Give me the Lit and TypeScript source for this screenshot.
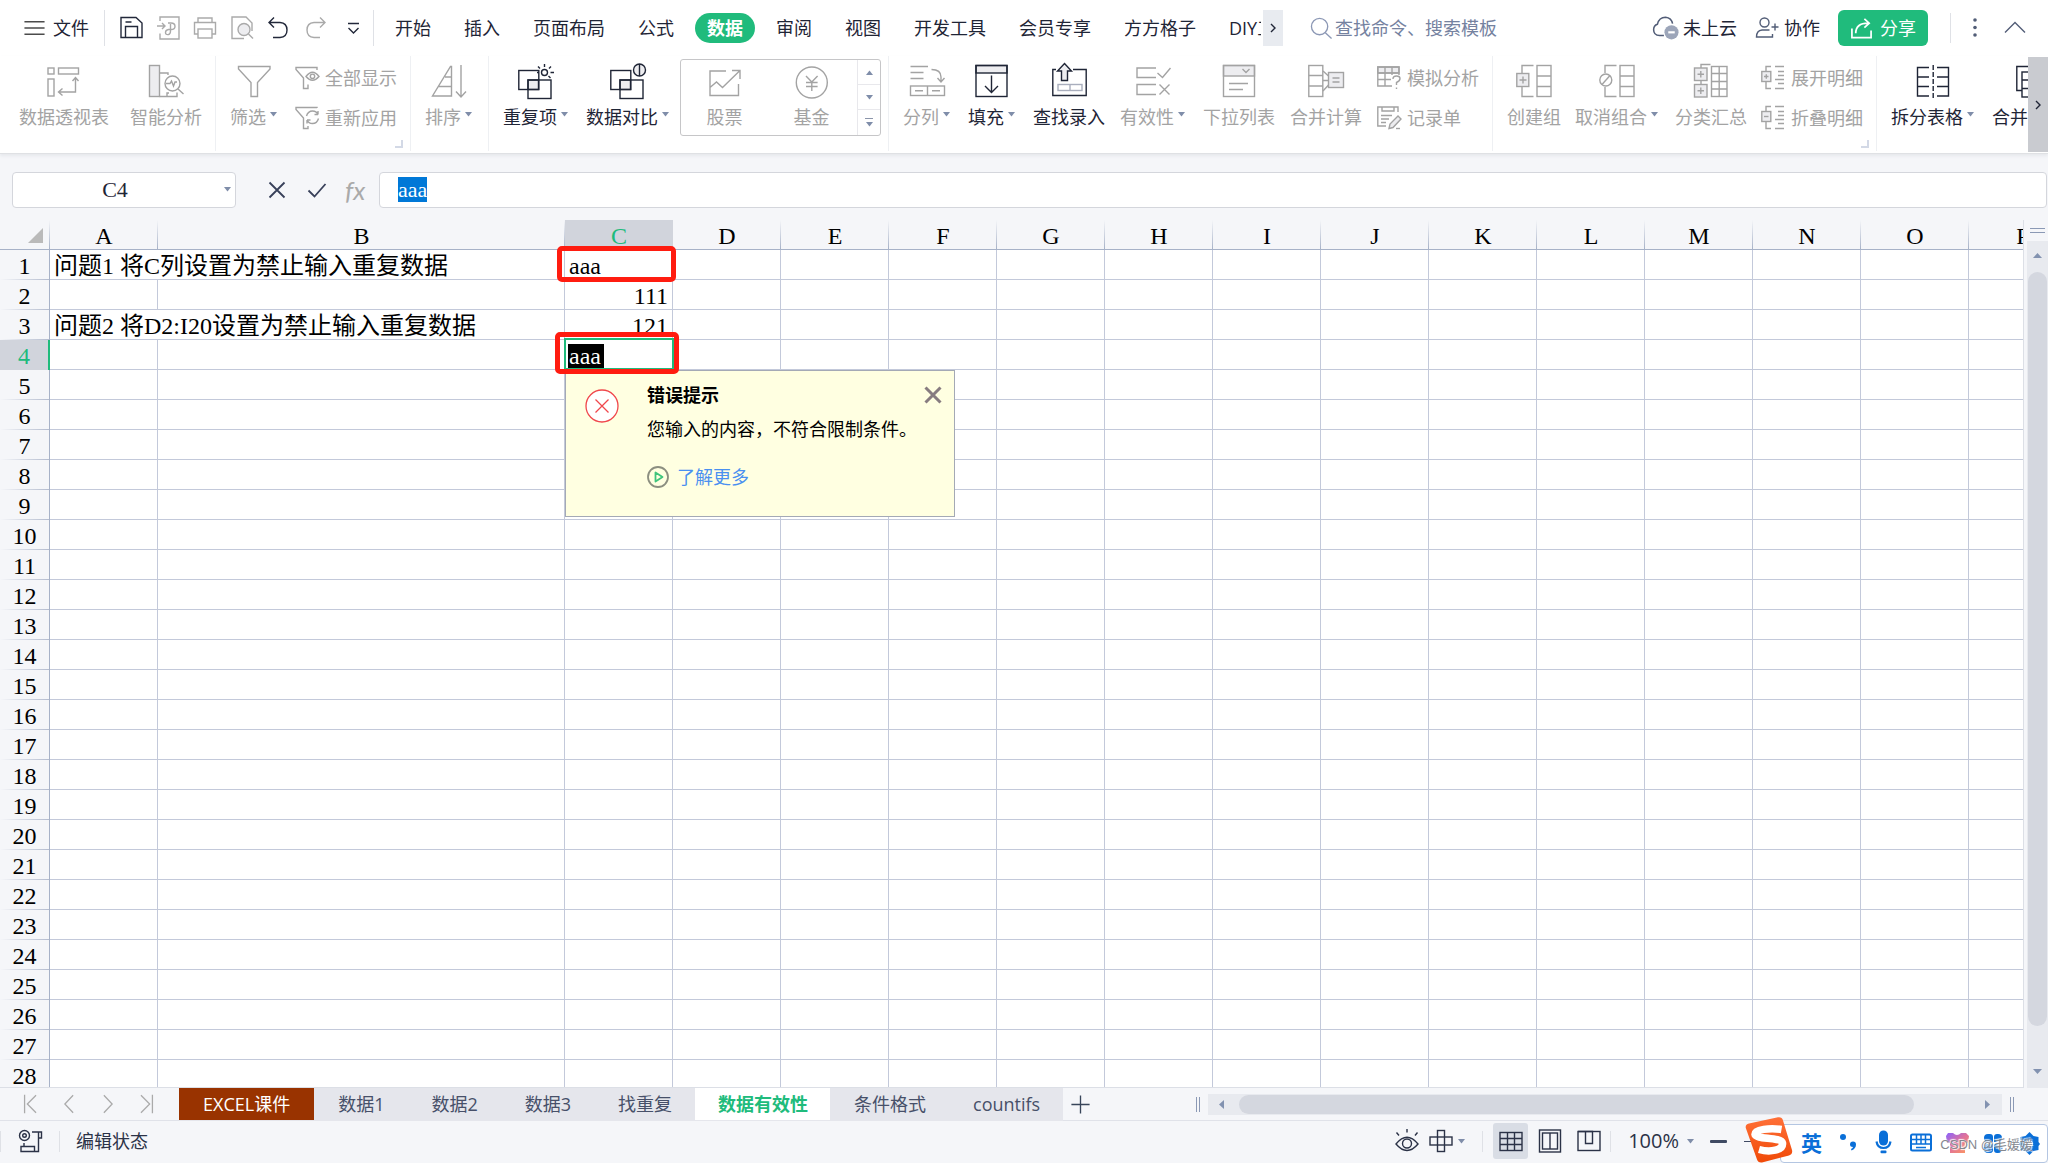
import { LitElement, html, svg, css, nothing } from "lit";
import type { SVGTemplateResult } from "lit";
import { customElement, state, query } from "lit/decorators.js";
import { classMap } from "lit/directives/class-map.js";

/* ---------- icon shapes: 36-unit ribbon icons, 24-unit small icons ---------- */
const icons: Record<string, SVGTemplateResult> = {
  pivot: svg`<rect x="2" y="4" width="6" height="6"/><rect x="12.5" y="4" width="20" height="6"/><rect x="2" y="15" width="6" height="17"/><path d="M29.5 14V28H13M26.5 17l3-3.5 3 3.5M16.5 24.5l-4 3.5 4 3.5"/>`,
  smart: svg`<rect class="tint" x="1.5" y="1.5" width="10" height="31"/><path d="M11.500 9H20v2M11.500 32.500H29v-4M19 32v-3h2"/><circle cx="24.500" cy="19.500" r="7.500"/><path d="M30 25l5.500 5M18 19.500h4l1.500-2.500 2 5 1.500-4h2"/>`,
  filter: svg`<path d="M2.500 2.500H34V5L21.500 18.500V32.500H15V18.500L2.500 5Z"/>`,
  sort: svg`<path d="M20.500 2.500V32H1.500L19.500 2.500ZM14 13h6.500M7.500 22.500h13M30 1V33M25 27.500l5 5.500 5-5.500"/>`,
  dup: svg`<rect class="tint" x="10" y="16" width="10.500" height="9.500"/><rect x=".8" y="6.500" width="20" height="19"/><rect x="10" y="16" width="23" height="18.500"/><circle cx="26.500" cy="8.500" r="3"/><path d="M26.500 0v3M20 2.500l2 2M33 2.500l-2 2M32.500 8.500H36M19 8.500h2M30.500 12l2 2"/>`,
  compare: svg`<rect class="tint" x="10" y="16" width="10.500" height="9.500"/><rect x=".8" y="6.500" width="20" height="19"/><rect x="10" y="16" width="23" height="18.500"/><circle class="tint" cx="29.500" cy="6" r="6"/><path d="M29.500 0V12"/>`,
  stock: svg`<path d="M19 7H3V31.500H31.500V20M3 23.500l6.500-5.500 6 5.500L33 6.500M25 6.500h8V15"/>`,
  fund: svg`<circle cx="17.800" cy="18.500" r="15.500"/><path d="M12 12l5.800 6 5.800-6M17.800 18V27M12 18.500h11.600M12 22.500h11.600"/>`,
  split: svg`<path d="M1.500 2.500H19M1.500 8.500H14.500M1.500 14.500H14.500M22.500 5.500Q32 5.500 32 13V17.500M28.500 14l3.500 4 3.500-4"/><rect x="1.500" y="22" width="34" height="9.500"/><path d="M18.500 22v9.500M6 26.700h8M23 26.700h8"/>`,
  fill: svg`<rect class="tint" x="2" y="1.500" width="31" height="7.500"/><rect x="2" y="1.500" width="31" height="31"/><path d="M17.500 11.500V28M11 22l6.500 6.500L24 22"/>`,
  lookup: svg`<path d="M5 5.500H1.800V31.500H35.200V5.500H22"/><path class="tint" d="M13.500-.5L20.500 7H16.500V16.500H10.500V7H6.500Z"/><g class="soft"><rect x="7" y="20.500" width="24" height="6"/><path d="M19 20.500v6"/></g>`,
  valid: svg`<path d="M21 4H2V13.500H21M21 20.500H2V30.500H21M22.500 9l5 4.500L35.500 4M24.500 20.500l10 10M34.500 20.500l-10 10"/>`,
  droplist: svg`<rect class="tint" x="2.500" y="1.500" width="31" height="10.500"/><rect x="2.500" y="1.500" width="31" height="31"/><path d="M21.500 5l3.500 3.500L28.500 5M8 19.500H27M8 25.500H22"/>`,
  consol: svg`<rect x=".8" y="1.500" width="14" height="31"/><path d="M.8 11.500h14M.8 22h14M15 7l5.500 5M15 16.500h5M15 27l5.500-6"/><rect class="tint" x="20.500" y="8.500" width="15" height="15"/><path d="M24.500 14h7M24.500 18h7"/>`,
  group: svg`<path d="M17.500 1.500H6V9M6 23v9.500H17.500"/><rect class="tint" x=".8" y="9.500" width="12" height="13"/><path d="M3.500 16h7M7 12.500v7"/><rect x="21" y="1.500" width="14" height="31"/><path d="M21 12h14M21 22.500h14"/>`,
  ungroup: svg`<path d="M17.500 1.500H6V9M6 23v9.500H17.500"/><circle cx="6.800" cy="16" r="6"/><path d="M3 20.500l8-9"/><rect x="21" y="1.500" width="14" height="31"/><path d="M21 12h14M21 22.500h14"/>`,
  subtotal: svg`<path d="M17.500 .5H8V4"/><rect class="tint" x="1.500" y="4" width="12.500" height="12.500"/><rect class="tint" x="1.500" y="20.500" width="12.500" height="12.500"/><path d="M4.500 10.200h6.500M7.800 7v6.500M4.500 26.700h6.500M7.800 23.500V30M8 16.500v4"/><rect x="18.500" y="2.500" width="15.500" height="30"/><path d="M18.500 9.500H34M18.500 17.500H34M18.500 25H34M26.200 2.500v30"/>`,
  splittable: svg`<path d="M14 3.500H2.500V32H14M2.500 13H14M2.500 22.500H14M22 3.500H33.500V32H22M22 13h11.500M22 22.500h11.500"/><path d="M18.200 1V35" stroke-dasharray="5 2"/>`,
  mergetable: svg`<path d="M6 26.500H.8V2.500H34V26.500"/><rect x="6" y="8" width="28" height="25"/><path d="M6 16h28M6 24.500h28M14 8v25"/>`,
  showall: svg`<path d="M22 4V1.500H1V3.500L8.500 12V22.500H13V18.500"/><path d="M11 10.500Q17.500 2 24 10.500Q17.500 18 11 10.500Z"/><circle cx="17.500" cy="10.300" r="2.200"/>`,
  reapply: svg`<path d="M22 2V1.500H1V3.500L8.500 12V22.500H13V20"/><path d="M11.500 10Q13 5 17.500 5Q21.500 5 23 8.500V5M23.500 12.500Q22 17.500 17.500 17.500Q13.500 17.500 12 14V17.500M23 8.500h-3.500M12 14h3.500"/>`,
  whatif: svg`<path class="tint" d="M.8 1H22v6H.8Z"/><path d="M22 9V1H.8V20H15M.8 7H22M.8 13.500H14M8 1V20M15 1V9M16 13Q16 10 19.500 10Q23 10 23 12.500Q23 15 19.500 16.500V19M19.500 21.500V23"/>`,
  record: svg`<path d="M21 6V1H.8V20H9M5 1.500V5H17V1M4 9.500H15M4 13H12M4 16.500H9"/><path class="tint" d="M12 22.500l1-4.500L21 10l3 3-8 8.500Z"/><path d="M19 22.500h4"/>`,
  expand: svg`<path d="M10 .5H5V5.500M5 15.500V22.500H10M14 .5h9M17 5.500h6M17 9.500h6M14 13.500h9M17 17.500h6M14 22.500h9"/><rect class="tint" x=".8" y="5.500" width="9" height="10"/><path d="M3 10.500h4.500M5.300 8.200v4.600"/>`,
  collapse: svg`<path d="M10 .5H5V5.500M5 15.500V22.500H10M14 .5h9M17 5.500h6M17 9.500h6M14 13.500h9M17 17.500h6M14 22.500h9"/><rect class="tint" x=".8" y="5.500" width="9" height="10"/><path d="M3 10.500h4.500"/>`,
  menu: svg`<path d="M1.500 5h21M1.500 11.500h21M1.500 18h21"/>`,
  save: svg`<path d="M2 1.500H17L23 7V21.500H2Z"/><path d="M6.500 21.500V10.500H18.500V21.500M6.500 6h6"/>`,
  exportpdf: svg`<path d="M4 5V1H23V23H4V17.500M1 10H8.500M6 7l3 3-3 3M12 7H15Q19 7 19 10.500Q19 13.500 15 13.500H12.500Q9.500 14 9.500 16.500Q9.500 19 12.500 18.500Q14.500 18 14.500 15V8"/>`,
  print: svg`<path d="M5 6V2H19V6M5 18H1.500V6.500H22.500V18H19"/><rect x="5" y="13" width="14" height="9"/>`,
  preview: svg`<path d="M14 22.500H2V1H16l6 6v8"/><circle class="tint" cx="14" cy="13.500" r="6"/><path d="M18.500 18l4.500 4.500"/>`,
  undo: svg`<path d="M7 1.500L2 6.500l5 5M2 6.500H13Q20 7 20 14Q20 21 13 21.500H6"/>`,
  redo: svg`<path d="M16 1.500l5 5-5 5M21 6.500H10Q3 7 3 14Q3 21 10 21.500H16"/>`,
  more: svg`<path d="M7 7.500h11M7.500 12l5 5 5-5"/>`,
  search: svg`<circle cx="10" cy="10" r="8.500"/><path d="M16 16.500l6.500 6"/>`,
  cloud: svg`<path d="M11 19H7Q1.500 18.500 1.500 13.500Q1.500 9.500 5 8.500Q6.500 2 12.500 2Q18 2.500 19 8"/><circle class="badge" cx="18" cy="16" r="6.500"/><path class="onbadge" d="M15 16h6"/>`,
  person: svg`<circle cx="9.500" cy="6.500" r="4.500"/><path d="M14.500 14H7Q1.500 14.500 1.500 21H17.500V18M20 7.500v7M16.500 11h7"/>`,
  share: svg`<path d="M2 12V21.500H22V14M6 17Q6 6.500 19 6.500M15 2l5 4.500-5 4.500"/>`,
  dots: svg`<g class="solid"><circle cx="12" cy="4" r="1.800"/><circle cx="12" cy="11.500" r="1.800"/><circle cx="12" cy="19" r="1.800"/></g>`,
  up: svg`<path d="M2 16.500L12 6.500l10 10"/>`,
  right: svg`<path d="M10 8l4 4-4 4"/>`,
  cross: svg`<path d="M4.500 4.500l15 15M19.500 4.500l-15 15"/>`,
  tick: svg`<path d="M3.500 12.500l6 6L20.500 6"/>`,
  first: svg`<path d="M5 2V22M17.500 2.500L8 12l9.500 9.500"/>`,
  prev: svg`<path d="M16.500 2.500L7.500 12l9 9.500"/>`,
  next: svg`<path d="M7.500 2.500L16.500 12l-9 9.500"/>`,
  last: svg`<path d="M19 2V22M6.500 2.500L16 12l-9.500 9.500"/>`,
  plus: svg`<path d="M12 2.500v19M2.500 12h19"/>`,
  macro: svg`<circle cx="6.500" cy="6.500" r="5"/><circle cx="6.500" cy="6.500" r="1.800"/><path d="M14 3H23.500V9H21M20.500 3V22.500H3V17.500H16.500V22M6 14v3"/>`,
  eye: svg`<path d="M1 15Q12 1.500 23 15Q12 28 1 15ZM12 0v3.500M1.500 3.500l2.500 3M22.500 3.500l-2.500 3"/><circle cx="12" cy="14.500" r="4.500"/>`,
  crosshair: svg`<rect x="8.500" y="1.500" width="7" height="21"/><rect x="1" y="8" width="22" height="8"/>`,
  gridview: svg`<rect x="1" y="3.500" width="22" height="18"/><path d="M1 9.500h22M1 15.500h22M8.500 3.500v18M15.500 3.500v18"/>`,
  pageview: svg`<rect x="1.500" y="1" width="21" height="22"/><rect x="4.500" y="4" width="15" height="16"/><path d="M12 4v16"/>`,
  breakview: svg`<rect x="1" y="2.500" width="22" height="19"/><path d="M1 2.500h14.500V14.500H8.500V2.500"/>`,
};

const icon = (name: string, size: number, cls = "") => html`
  <svg class="ic ${cls}" width=${size} height=${size} viewBox=${size >= 36 ? "0 0 36 36" : "0 0 24 24"} aria-hidden="true">${icons[name]}</svg>`;

const caret = html`<svg class="caret" width="7" height="5" viewBox="0 0 7 5" aria-hidden="true"><path d="M0 0h7L3.500 4.500Z"/></svg>`;

interface Command { label: string; icon: string; on?: boolean; drop?: boolean }
type Entry = Command | Command[] | "gallery";
interface Group { entries: Entry[]; launcher?: boolean; tight?: boolean }

const ribbon: Group[] = [
  { entries: [{ label: "数据透视表", icon: "pivot" }, { label: "智能分析", icon: "smart" }] },
  {
    launcher: true,
    entries: [
      { label: "筛选", icon: "filter", drop: true },
      [{ label: "全部显示", icon: "showall" }, { label: "重新应用", icon: "reapply" }],
    ],
  },
  { entries: [{ label: "排序", icon: "sort", drop: true }] },
  {
    entries: [
      { label: "重复项", icon: "dup", on: true, drop: true },
      { label: "数据对比", icon: "compare", on: true, drop: true },
      "gallery",
    ],
  },
  {
    entries: [
      { label: "分列", icon: "split", drop: true },
      { label: "填充", icon: "fill", on: true, drop: true },
      { label: "查找录入", icon: "lookup", on: true },
      { label: "有效性", icon: "valid", drop: true },
      { label: "下拉列表", icon: "droplist" },
      { label: "合并计算", icon: "consol" },
      [{ label: "模拟分析", icon: "whatif" }, { label: "记录单", icon: "record" }],
    ],
  },
  {
    launcher: true,
    tight: true,
    entries: [
      { label: "创建组", icon: "group" },
      { label: "取消组合", icon: "ungroup", drop: true },
      { label: "分类汇总", icon: "subtotal" },
      [{ label: "展开明细", icon: "expand" }, { label: "折叠明细", icon: "collapse" }],
    ],
  },
  {
    entries: [
      { label: "拆分表格", icon: "splittable", on: true, drop: true },
      { label: "合并表格", icon: "mergetable", on: true, drop: true },
    ],
  },
];

const menus = ["开始", "插入", "页面布局", "公式", "数据", "审阅", "视图", "开发工具", "会员专享", "方方格子", "DIY工具箱"];
const quick: [string, string, boolean][] = [
  ["save", "保存", true], ["exportpdf", "输出为PDF", false], ["print", "打印", false],
  ["preview", "打印预览", false], ["undo", "撤销", true], ["redo", "恢复", false], ["more", "自定义", true],
];
const columns = "ABCDEFGHIJKLMNOP".split("");
const sheets = ["EXCEL课件", "数据1", "数据2", "数据3", "找重复", "数据有效性", "条件格式", "countifs"];
const notes: Record<number, string> = {
  1: "问题1 将C列设置为禁止输入重复数据",
  3: "问题2 将D2:I20设置为禁止输入重复数据",
};
const columnC: Record<number, string | number> = { 1: "aaa", 2: 111, 3: 121 };

@customElement("app-root")
export class AppRoot extends LitElement {
  @state() private menu = "数据";
  @state() private sheet = "数据有效性";
  @state() private warning = true;
  @query(".formula") private formula!: HTMLInputElement;

  static styles = css`
    :host {
      display: flex; flex-direction: column; height: 100vh; overflow: hidden; position: relative;
      background: #f5f6f9; color: #1f2536;
      font: 18px/24px "Open Sans", "Noto Sans CJK SC", sans-serif;
    }
    * { box-sizing: border-box; }
    button, input { font: inherit; color: inherit; border: 0; padding: 0; margin: 0; background: none; outline: none; }
    button { white-space: nowrap; cursor: pointer; flex: none; display: flex; align-items: center; }
    a { text-decoration: none; }
    .ic { display: block; flex: none; overflow: visible; fill: none; stroke: currentColor; stroke-width: 1.4; }
    .ic .tint { fill: #ededf0; }
    .ic .soft { stroke: #a9aebd; }
    .ic .solid { fill: currentColor; stroke: none; }
    .ic .badge { fill: #9ca5b9; stroke: none; }
    .ic .onbadge { stroke: #fff; stroke-width: 2; }
    .caret { fill: #7f8da9; flex: none; display: block; }
    .rule { width: 1px; flex: none; background: #dfe1e6; }

    /* menu bar */
    .menubar { display: flex; align-items: center; height: 56px; flex: none; background: #fff; }
    .menubar .rule { height: 36px; }
    .file { gap: 7px; padding: 0 15px 0 23px; }
    .file .ic { color: #4b4b4b; }
    .quick { display: flex; gap: 13px; padding: 0 8px 0 14px; color: #22283a; }
    .quick .off { color: #aaa; }
    .menus { display: flex; gap: 33px; padding-left: 21px; align-items: center; }
    .menus button { height: 30px; }
    .menus .current { background: #20bb7c; color: #fff; font-weight: 700; border-radius: 15px; padding: 0 12px; margin: 0 -12px; }
    .menus .cut { width: 32px; overflow: hidden; margin-right: 2px; }
    .scrollmenu { width: 20px; height: 36px; background: #e8ebf0; justify-content: center; }
    .search { display: flex; align-items: center; gap: 2px; margin-left: 27px; color: #8c98b5; flex: 0 1 260px; min-width: 0; }
    .search input { width: 100%; }
    .search input::placeholder { color: #75829f; opacity: 1; }
    .account { display: flex; align-items: center; gap: 18px; margin-left: auto; padding-right: 21px; }
    .account button { gap: 5px; }
    .account .ic { color: #525d77; }
    .account .share { height: 36px; padding: 0 12px; gap: 7px; background: #20bb7c; color: #fff; border-radius: 6px; }
    .account .share .ic { color: #fff; stroke-width: 1.8; }
    .account .rule { height: 30px; margin: 0 -6px 0 4px; }
    .account .rule + button { margin-right: -2px; }

    /* ribbon */
    .ribbon { display: flex; height: 98px; flex: none; background: #fff; border-bottom: 1px solid #dfe1e4; box-shadow: 0 2px 3px #e6e8ec; position: relative; }
    .groups { display: flex; flex: 1; min-width: 0; overflow: hidden; height: 95px; }
    .group { display: flex; align-items: flex-start; gap: 15px; padding: 8px 13px 0 14px; border-right: 1px solid #eef0f3; flex: none; position: relative; color: #a3a3a3; }
    .group.tight { gap: 14px; }
    .group:first-child { padding-left: 19px; gap: 21px; }
    .cmd { flex-direction: column; gap: 5px; color: #a3a3a3; }
    .cmd.on { color: #1f2536; }
    .cmd.drop { margin-right: 3px; }
    .cmd .label { display: flex; align-items: center; gap: 4px; }
    .cmd .caret { margin-top: -6px; }
    .pair { display: flex; flex-direction: column; gap: 16px; padding-top: 2px; }
    .pair button { gap: 6px; color: #a3a3a3; }
    .launcher { position: absolute; right: 7px; bottom: 3px; width: 8px; height: 8px; border: solid #d3d9e6; border-width: 0 2px 2px 0; }
    .gallery { display: flex; width: 201px; height: 77px; border: 1px solid #c6c6c8; border-radius: 3px; margin: -5px -6px 0 -7px; }
    .gallery .cells { display: flex; flex: 1; justify-content: space-around; padding: 4px 2px 0 0; }
    .steps { width: 23px; display: grid; grid-template-rows: repeat(3, 1fr); border-left: 1px solid #e8e8ec; }
    .steps button { justify-content: center; border-bottom: 1px solid #e8e8ec; flex-direction: column; gap: 3px; }
    .steps button:last-child { border-bottom: 0; }
    .steps .flip { transform: rotate(180deg); }
    .steps .bar { width: 8px; height: 1px; background: #8b95aa; }
    .scrollribbon { width: 20px; height: 95px; margin-top: 1px; background: #c9cbd0; justify-content: center; }

    /* formula bar */
    .formulabar { display: flex; align-items: center; height: 66px; flex: none; padding: 5px 1px 0 12px; }
    .box { display: flex; align-items: center; height: 36px; background: #fff; border: 1px solid #d4d6dc; border-radius: 4px; }
    .namebox { width: 224px; padding-right: 4px; margin-right: 29px; }
    .namebox input { flex: 1; min-width: 0; text-align: center; padding-right: 7px; }
    .box input { font: 22px/25px "Liberation Serif", "Noto Sans CJK SC", serif; height: 25px; }
    .tools { display: flex; align-items: center; gap: 16px; margin-right: 12px; color: #38405a; }
    .tools .ic { stroke-width: 1.8; }
    .fx { font: italic 26px/30px Lato, "Open Sans", sans-serif; color: #aaa; width: 22px; }
    .formulabox { flex: 1; min-width: 0; padding: 0 18px; }
    .formula { width: 100%; }
    .formula::selection { background: #0078d7; color: #fff; }

    /* sheet */
    .sheet { display: flex; flex: 1; min-height: 0; }
    .view { flex: 1; min-width: 0; overflow: hidden; border-right: 1px solid #dcdfe6; border-bottom: 1px solid #dcdfe6; }
    table { table-layout: fixed; border-collapse: separate; border-spacing: 0; width: 2077px; font: 24px/24px "Liberation Serif", "Noto Sans CJK SC", serif; color: #000; }
    .c-head { width: 50px; } .c-std { width: 108px; } .c-wide { width: 407px; }
    tr { height: 30px; }
    th { font-weight: 400; padding: 3px 0 1px; text-align: center; background: #f5f6f9; }
    thead th { border-bottom: 1px solid #a7b2c8; background: linear-gradient(to bottom, #f5f6f9, #a7b2c8) right / 1px 100% no-repeat #f5f6f9; }
    tbody th { border-right: 1px solid #a7b2c8; background: linear-gradient(to right, #f5f6f9, #b4bccf) bottom / 100% 1px no-repeat #f5f6f9; }
    thead th.hot { background: #d1d4dc; color: #20bb7c; }
    tbody th.hot { background: #d1d4dc; color: #20bb7c; border-right: 2px solid #20bb7c; }
    td { background: #fff; border-right: 1px solid #c3c9da; border-bottom: 1px solid #c3c9da; padding: 4px 4px 1px; white-space: nowrap; position: relative; }
    td.num { text-align: right; }
    .corner { display: block; width: 15px; height: 15px; margin: 0 0 0 28px; background: #bababa; clip-path: polygon(100% 0, 100% 100%, 0 100%); }
    .editor { position: absolute; z-index: 1; left: -1px; right: -2px; top: -2px; height: 32px; border: 2px solid #20bb7c; background: #fff; padding: 4px 2px 0; }
    .editor span { display: block; width: max-content; background: #000; color: #fff; padding: 0 3px 0 1px; }
    .mark { position: absolute; z-index: 3; border: 5px solid #ff1c10; border-radius: 5px; pointer-events: none; }
    .mark.one { left: -8px; top: -4px; width: 119px; height: 36px; }
    .mark.two { left: -10px; top: -8px; width: 124px; height: 42px; }
    .tip { position: absolute; z-index: 2; left: 0; top: 30px; width: 390px; height: 147px; background: #ffffe1; border: 1px solid #a4a9b5; font: 18px/24px "Open Sans", "Noto Sans CJK SC", sans-serif; display: grid; grid-template-columns: 62px 1fr auto; align-content: start; padding: 12px 9px 0 19px; }
    .tip .alert { margin-top: 6px; }
    .tip h2 { font-size: 18px; line-height: 24px; margin: 0; }
    .tip p { margin: 10px 0 24px; line-height: 24px; }
    .tip a { display: flex; align-items: center; gap: 8px; color: #4a90f0; }
    .tip .close { align-self: start; color: #877c80; margin-left: -24px; }
    .tip .close .ic { stroke-width: 3; }
    .vscroll { width: 24px; display: flex; flex-direction: column; padding-left: 3px; }
    .splitter { height: 21px; display: flex; flex-direction: column; justify-content: center; align-items: center; gap: 3px; padding-bottom: 1px; }
    .splitter i { width: 15px; height: 1px; background: #8b99b5; }
    .vtrack { flex: 1; min-height: 0; background: #e8eaef; display: flex; flex-direction: column; padding: 0 1px; }
    .vtrack button { height: 31px; justify-content: center; padding-bottom: 3px; }
    .vtrack .down { height: 62px; padding-top: 32px; }
    .thumb { background: #d4d7df; border-radius: 10px; flex: 1; }

    /* sheet tabs */
    .tabbar { display: flex; height: 33px; flex: none; border-bottom: 1px solid #e0e2e9; }
    .nav { display: flex; align-items: center; gap: 15px; padding: 0 22px 0 20px; color: #aaa; width: 179px; justify-content: space-between; }
    .tabs { display: flex; background: #e5e6ec; height: 33px; padding-bottom: 1px; }
    .tabs button { padding: 0 23px 0 24px; color: #475069; }
    .tabs .first { background: #993300; color: #fff; padding: 0 24px; }
    .tabs .current { background: #fff; color: #20bb7c; font-weight: 700; padding: 0 22px 0 23px; }
    .add { padding: 0 6px; color: #38455a; }
    .hscroll { display: flex; align-items: center; width: 852px; margin-left: auto; padding-right: 34px; gap: 8px; flex: none; }
    .grip { width: 4px; height: 15px; border: solid #8b99b5; border-width: 0 1px; flex: none; }
    .htrack { flex: 1; height: 21px; background: #e8eaef; display: flex; align-items: center; }
    .htrack button { width: 31px; height: 21px; justify-content: center; padding-right: 5px; }
    .htrack .rt { width: 88px; padding: 0 0 0 58px; }
    .htrack .thumb { height: 19px; }
    .turn-l { transform: rotate(90deg); } .turn-r { transform: rotate(-90deg); } .turn-u { transform: rotate(180deg); }
    .scrollcaret { fill: #8292b0; display: block; flex: none; }

    /* status bar */
    .status { display: flex; align-items: center; height: 42px; flex: none; color: #2b3247; padding-bottom: 2px; }
    .status .rule { height: 21px; }
    .macro { padding: 0 17px; }
    .mode { padding-left: 16px; }
    .viewtools { display: flex; align-items: center; margin-left: auto; }
    .viewtools .cursor { gap: 5px; margin: 0 17px 0 10px; }
    .viewbtn { width: 35px; height: 36px; justify-content: center; border-radius: 3px; margin-right: 4px; }
    .viewbtn.current { background: #d9dde5; margin-left: 10px; }
    .zoom { gap: 8px; font-size: 20px; padding: 0 16px 0 17px; }
    .minus { width: 17px; height: 3px; background: #3f4a63; border-radius: 1px; margin-right: 17px; }
    .level { appearance: none; width: 300px; height: 1px; background: #3f4a63; margin-right: 4px; }
    .level::-webkit-slider-thumb { appearance: none; width: 8px; height: 16px; background: #3f4a63; }

    /* input-method toolbar floating over the window */
    .ime { position: absolute; z-index: 5; right: 0; bottom: 0; display: flex; align-items: center; height: 39px; width: 268px; background: #fff; border: 1px solid #b4c6e2; border-radius: 4px; color: #0a6fd8; padding: 0 0 2px 20px; }
    .ime .logo { position: absolute; left: -36px; top: -8px; }
    .ime b { font-size: 21px; line-height: 30px; }
    .ime svg { display: block; flex: none; overflow: visible; }
    .stamp { position: absolute; right: 14px; top: 10px; font: 13px/20px "Liberation Sans", "Noto Sans CJK SC", sans-serif; color: #85888f; text-shadow: 1px 1px 1px #fff, -1px -1px 1px #fff; }
  `;

  firstUpdated() {
    this.formula.focus();
    this.formula.select();
  }

  private command(c: Command) {
    return html`<button class=${classMap({ cmd: true, on: !!c.on, drop: !!c.drop })}>
      ${icon(c.icon, 36)}<span class="label">${c.label}${c.drop ? caret : nothing}</span>
    </button>`;
  }

  private entry(e: Entry) {
    if (e === "gallery") {
      return html`<div class="gallery">
        <div class="cells">${this.command({ label: "股票", icon: "stock" })}${this.command({ label: "基金", icon: "fund" })}</div>
        <div class="steps">
          <button aria-label="上一行"><span class="flip">${caret}</span></button>
          <button aria-label="下一行">${caret}</button>
          <button aria-label="更多"><span class="bar"></span>${caret}</button>
        </div>
      </div>`;
    }
    if (Array.isArray(e)) {
      return html`<div class="pair">${e.map((c) => html`<button>${icon(c.icon, 24)}<span>${c.label}</span></button>`)}</div>`;
    }
    return this.command(e);
  }

  private scrollCaret(turn: string) {
    return html`<svg class="scrollcaret ${turn}" width="9" height="5" viewBox="0 0 9 5" aria-hidden="true"><path d="M0 0h9L4.500 5Z"/></svg>`;
  }

  private tip() {
    return html`<div class="tip" role="alert">
      <svg class="alert" width="34" height="34" viewBox="0 0 34 34" fill="#fff" stroke="#f0474c" stroke-width="1.300"><circle cx="17" cy="17" r="16"/><path d="M10.500 10.500l13 13M23.500 10.500l-13 13"/></svg>
      <div>
        <h2>错误提示</h2>
        <p>您输入的内容，不符合限制条件。</p>
        <a href="#"><svg width="22" height="22" viewBox="0 0 22 22" fill="none"><circle cx="11" cy="11" r="10" stroke="#8c8f80" stroke-width="1.800"/><path d="M8.500 6.500V15.500L15.500 11Z" stroke="#3fc47c" stroke-width="1.800" stroke-linejoin="round"/></svg>了解更多</a>
      </div>
      <button class="close" aria-label="关闭" @click=${() => (this.warning = false)}>${icon("cross", 24)}</button>
    </div>`;
  }

  private cellC(row: number) {
    if (row === 4) {
      return html`<td><div class="editor"><span>aaa</span></div><span class="mark two"></span>${this.warning ? this.tip() : nothing}</td>`;
    }
    const value = columnC[row];
    return html`<td class=${typeof value === "number" ? "num" : ""}>${value ?? nothing}${row === 1 ? html`<span class="mark one"></span>` : nothing}</td>`;
  }

  private row(n: number) {
    return html`<tr>
      <th scope="row" class=${n === 4 ? "hot" : ""}>${n}</th>
      ${notes[n] ? html`<td colspan="2">${notes[n]}</td>` : html`<td></td><td></td>`}
      ${this.cellC(n)}
      ${columns.slice(3).map(() => html`<td></td>`)}
    </tr>`;
  }

  render() {
    return html`
      <header class="menubar">
        <button class="file">${icon("menu", 23)}文件</button>
        <span class="rule"></span>
        <div class="quick">${quick.map(([n, label, on]) => html`<button class=${on ? "" : "off"} aria-label=${label}>${icon(n, 24)}</button>`)}</div>
        <span class="rule"></span>
        <nav class="menus">
          ${menus.map((m, i) => html`<button class=${classMap({ current: m === this.menu, cut: i === menus.length - 1 })} @click=${() => (this.menu = m)}>${m}</button>`)}
        </nav>
        <button class="scrollmenu" aria-label="更多选项卡">${icon("right", 24)}</button>
        <label class="search">${icon("search", 23)}<input type="text" placeholder="查找命令、搜索模板" aria-label="查找命令、搜索模板"></label>
        <div class="account">
          <button>${icon("cloud", 26)}未上云</button>
          <button>${icon("person", 24)}协作</button>
          <button class="share">${icon("share", 23)}分享</button>
          <span class="rule"></span>
          <button aria-label="更多">${icon("dots", 24)}</button>
          <button aria-label="收起功能区">${icon("up", 24)}</button>
        </div>
      </header>

      <section class="ribbon">
        <div class="groups">
          ${ribbon.map((g) => html`<div class=${classMap({ group: true, tight: !!g.tight })}>
            ${g.entries.map((e) => this.entry(e))}${g.launcher ? html`<span class="launcher"></span>` : nothing}
          </div>`)}
        </div>
        <button class="scrollribbon" aria-label="向右滚动">${icon("right", 24)}</button>
      </section>

      <section class="formulabar">
        <div class="box namebox"><input type="text" .value=${"C4"} aria-label="名称框"><button aria-label="名称列表">${caret}</button></div>
        <div class="tools">
          <button aria-label="取消">${icon("cross", 24)}</button>
          <button aria-label="输入">${icon("tick", 24)}</button>
          <button class="fx" aria-label="插入函数">fx</button>
        </div>
        <div class="box formulabox"><input class="formula" type="text" .value=${"aaa"} aria-label="编辑栏"></div>
      </section>

      <main class="sheet">
        <div class="view">
          <table>
            <colgroup><col class="c-head">${columns.map((c) => html`<col class=${c === "B" ? "c-wide" : "c-std"}>`)}</colgroup>
            <thead><tr><th aria-label="全选"><span class="corner"></span></th>${columns.map((c) => html`<th scope="col" class=${c === "C" ? "hot" : ""}>${c}</th>`)}</tr></thead>
            <tbody>${Array.from({ length: 28 }, (_, i) => this.row(i + 1))}</tbody>
          </table>
        </div>
        <div class="vscroll">
          <div class="splitter"><i></i><i></i></div>
          <div class="vtrack">
            <button aria-label="向上">${this.scrollCaret("turn-u")}</button>
            <div class="thumb"></div>
            <button class="down" aria-label="向下">${this.scrollCaret("")}</button>
          </div>
        </div>
      </main>

      <section class="tabbar">
        <div class="nav">
          ${[["first", "第一张"], ["prev", "上一张"], ["next", "下一张"], ["last", "最后一张"]].map(([n, label]) => html`<button aria-label=${label}>${icon(n, 22)}</button>`)}
        </div>
        <div class="tabs">
          ${sheets.map((s, i) => html`<button class=${classMap({ first: i === 0, current: s === this.sheet })} @click=${() => (this.sheet = s)}>${s}</button>`)}
        </div>
        <button class="add" aria-label="新建工作表">${icon("plus", 23)}</button>
        <div class="hscroll">
          <span class="grip"></span>
          <div class="htrack">
            <button aria-label="向左">${this.scrollCaret("turn-l")}</button>
            <div class="thumb"></div>
            <button class="rt" aria-label="向右">${this.scrollCaret("turn-r")}</button>
          </div>
          <span class="grip"></span>
        </div>
      </section>

      <footer class="status">
        <span class="rule"></span>
        <button class="macro" aria-label="宏">${icon("macro", 24)}</button>
        <span class="rule"></span>
        <span class="mode">编辑状态</span>
        <div class="viewtools">
          <button aria-label="护眼模式">${icon("eye", 24)}</button>
          <button class="cursor" aria-label="阅读模式">${icon("crosshair", 24)}${caret}</button>
          <span class="rule"></span>
          <button class="viewbtn current" aria-label="普通视图">${icon("gridview", 24)}</button>
          <button class="viewbtn" aria-label="分页预览">${icon("pageview", 24)}</button>
          <button class="viewbtn" aria-label="页面布局">${icon("breakview", 24)}</button>
          <span class="rule"></span>
          <button class="zoom">100%${caret}</button>
          <button class="minus" aria-label="缩小"></button>
          <input class="level" type="range" aria-label="缩放">
        </div>
      </footer>

      <aside class="ime">
        <svg class="logo" width="48" height="46" viewBox="0 0 48 46" aria-hidden="true">
          <defs><linearGradient id="flame" x1="0" y1="0" x2="0" y2="1"><stop offset="0" stop-color="#ff7038"/><stop offset="1" stop-color="#f04a08"/></linearGradient></defs>
          <path fill="url(#flame)" d="M4 6.500L33 .3Q37 -.3 38 3.500L47 33Q48 37 44 38.500L17 45.500Q13 46 12 42.500L.8 11Q0 7.500 4 6.500Z"/>
          <path fill="none" stroke="#fff" stroke-width="7.500" d="M36.500 12.500C25 10.500 9.500 12.500 10 17.500C10.500 22.500 36 20 37.500 26C38.500 33.500 25 35.500 14 32.500"/>
        </svg>
        <b>英</b>
        <svg width="72" height="24" viewBox="0 0 72 24" fill="#0a6fd8" aria-hidden="true">
          <circle cx="21" cy="6" r="3"/><path d="M28 13.500a3 3 0 1 1 6 0q0 4-4.500 6l-.5-1.500q2-1 2-2-3 0-3-2.500Z"/>
          <rect x="57" y="-.5" width="9" height="15" rx="4.500"/><path d="M54.500 10.500q1 6.500 7 6.500t7-6.500" fill="none" stroke="#0a6fd8" stroke-width="2.200"/><rect x="58.500" y="19.500" width="6" height="2.800" rx="1"/>
        </svg>
        <svg width="146" height="24" viewBox="0 0 146 24" aria-hidden="true">
          <defs><linearGradient id="shirt" x1="0" y1="0" x2="1" y2="1"><stop offset="0" stop-color="#8a63ff"/><stop offset=".5" stop-color="#e0729a"/><stop offset="1" stop-color="#ff9a5a"/></linearGradient></defs>
          <g fill="none" stroke="#0a6fd8" stroke-width="2"><rect x="17" y="3.500" width="20" height="16" rx="1.500"/><path stroke-width="1.500" d="M18 8.500h18M18 13h18M22.500 4v9M27 4v9M31.500 4v9M22 16.500h10"/></g>
          <path fill="url(#shirt)" d="M54 2h5q4 4 8 0h5l3 3-1 7h-3v10H56V12h-3l-1-7Z"/>
          <g fill="#0a6fd8"><path d="M94 3h2a3 3 0 0 1 3 3v5h-5a4 4 0 0 1 0-8ZM103 3h1a4 4 0 0 1 0 8h-4V6a3 3 0 0 1 3-3ZM94 13h5v5a3 3 0 0 1-3 4h-2a4 4 0 0 1 0-9ZM101 13h3a4 4 0 0 1 0 9h-1a3 3 0 0 1-3-3v-5Z"/>
          <path d="M135.500 1l4 4 5 1v5l1.500 2-1.500 2v4l-5 1-4 4-4-4-5-1v-4l-1.500-2 1.500-2V6l5-1Z"/></g>
          <circle cx="135.500" cy="13" r="3.500" fill="#fff"/>
        </svg>
        <span class="stamp">CSDN @毛媛媛</span>
      </aside>
    `;
  }
}
